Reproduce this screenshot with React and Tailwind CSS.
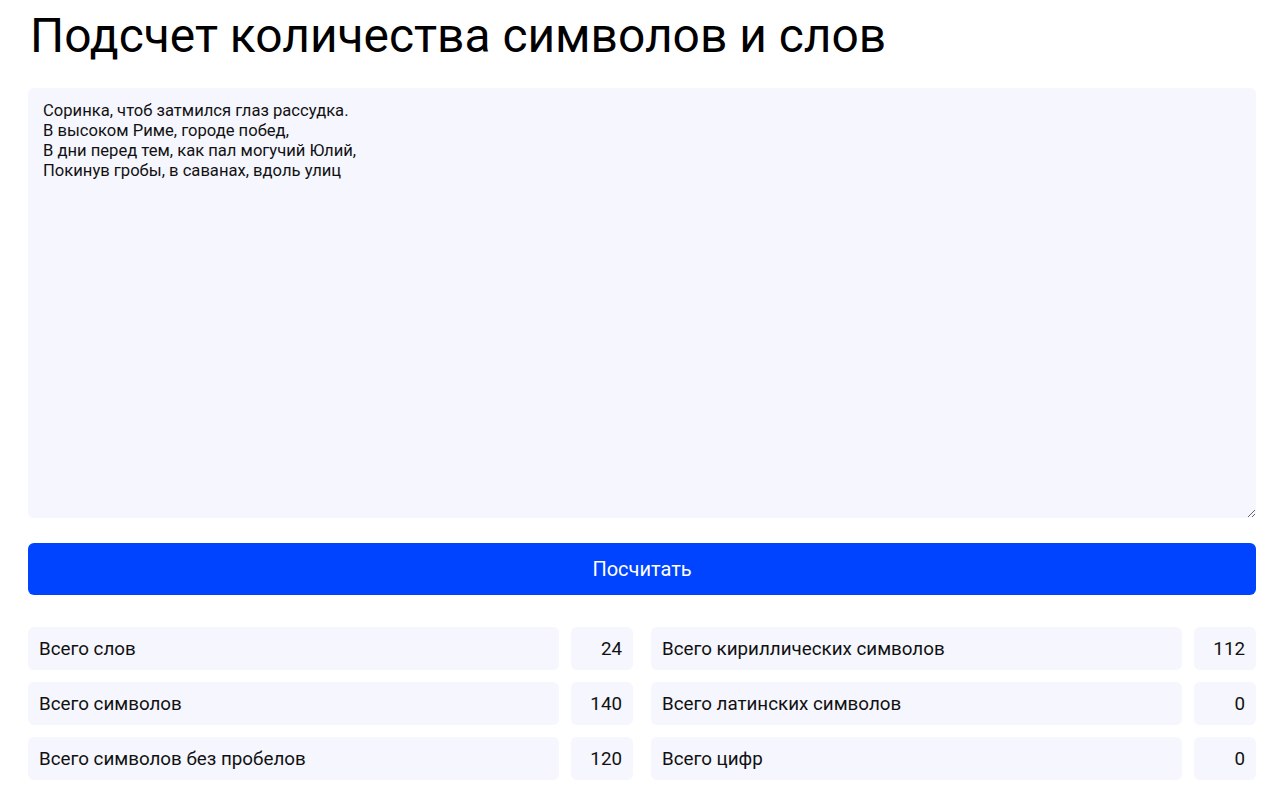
import React, { useState } from "react";

const SAMPLE = `Соринка, чтоб затмился глаз рассудка.
В высоком Риме, городе побед,
В дни перед тем, как пал могучий Юлий,
Покинув гробы, в саванах, вдоль улиц`;

const countStats = (text) => {
  const words = text.split(/\s+/).filter(Boolean).length;
  return {
    words,
    chars: text.length,
    noSpaces: text.replace(/\s/g, "").length,
    cyr: (text.match(/[а-яё]/gi) || []).length,
    lat: (text.match(/[a-z]/gi) || []).length,
    digits: (text.match(/[0-9]/g) || []).length,
  };
};

const StatRow = ({ label, value }) => (
  <div className="flex gap-3">
    <div className="flex-1 bg-[#f5f6fe] rounded-md h-[43px] flex items-center px-[11px] pt-[2px] text-[18.8px] text-[#111]">
      {label}
    </div>
    <div className="w-[62px] bg-[#f5f6fe] rounded-md h-[43px] flex items-center justify-end px-[11px] pt-[2px] text-[18.8px] text-[#111]">
      {value}
    </div>
  </div>
);

export default function App() {
  const [text, setText] = useState(SAMPLE);
  const [stats, setStats] = useState({
    words: 24,
    chars: 140,
    noSpaces: 120,
    cyr: 112,
    lat: 0,
    digits: 0,
  });

  return (
    <div
      className="min-h-screen bg-white pl-7 pr-6 pt-[6px] text-black"
      style={{ fontFamily: "Roboto, 'Noto Sans', sans-serif" }}
    >
      <h1 className="text-[47.9px] leading-[60px] font-normal ml-[2px]">
        Подсчет количества символов и слов
      </h1>

      <textarea
        className="mt-[22px] block w-full h-[430px] bg-[#f5f6fe] rounded-md px-[15px] pt-[13px] pb-3 text-[16.6px] leading-[20px] text-[#111] outline-none"
        value={text}
        onChange={(e) => setText(e.target.value)}
      />

      <button
        className="mt-[25px] w-full h-[52px] rounded-md bg-[#0044ff] text-white text-[20px]"
        onClick={() => setStats(countStats(text))}
      >
        Посчитать
      </button>

      <div className="mt-[32px] grid grid-cols-2 gap-x-[18px] gap-y-3">
        <StatRow label="Всего слов" value={stats.words} />
        <StatRow label="Всего кириллических символов" value={stats.cyr} />
        <StatRow label="Всего символов" value={stats.chars} />
        <StatRow label="Всего латинских символов" value={stats.lat} />
        <StatRow label="Всего символов без пробелов" value={stats.noSpaces} />
        <StatRow label="Всего цифр" value={stats.digits} />
      </div>
    </div>
  );
}
